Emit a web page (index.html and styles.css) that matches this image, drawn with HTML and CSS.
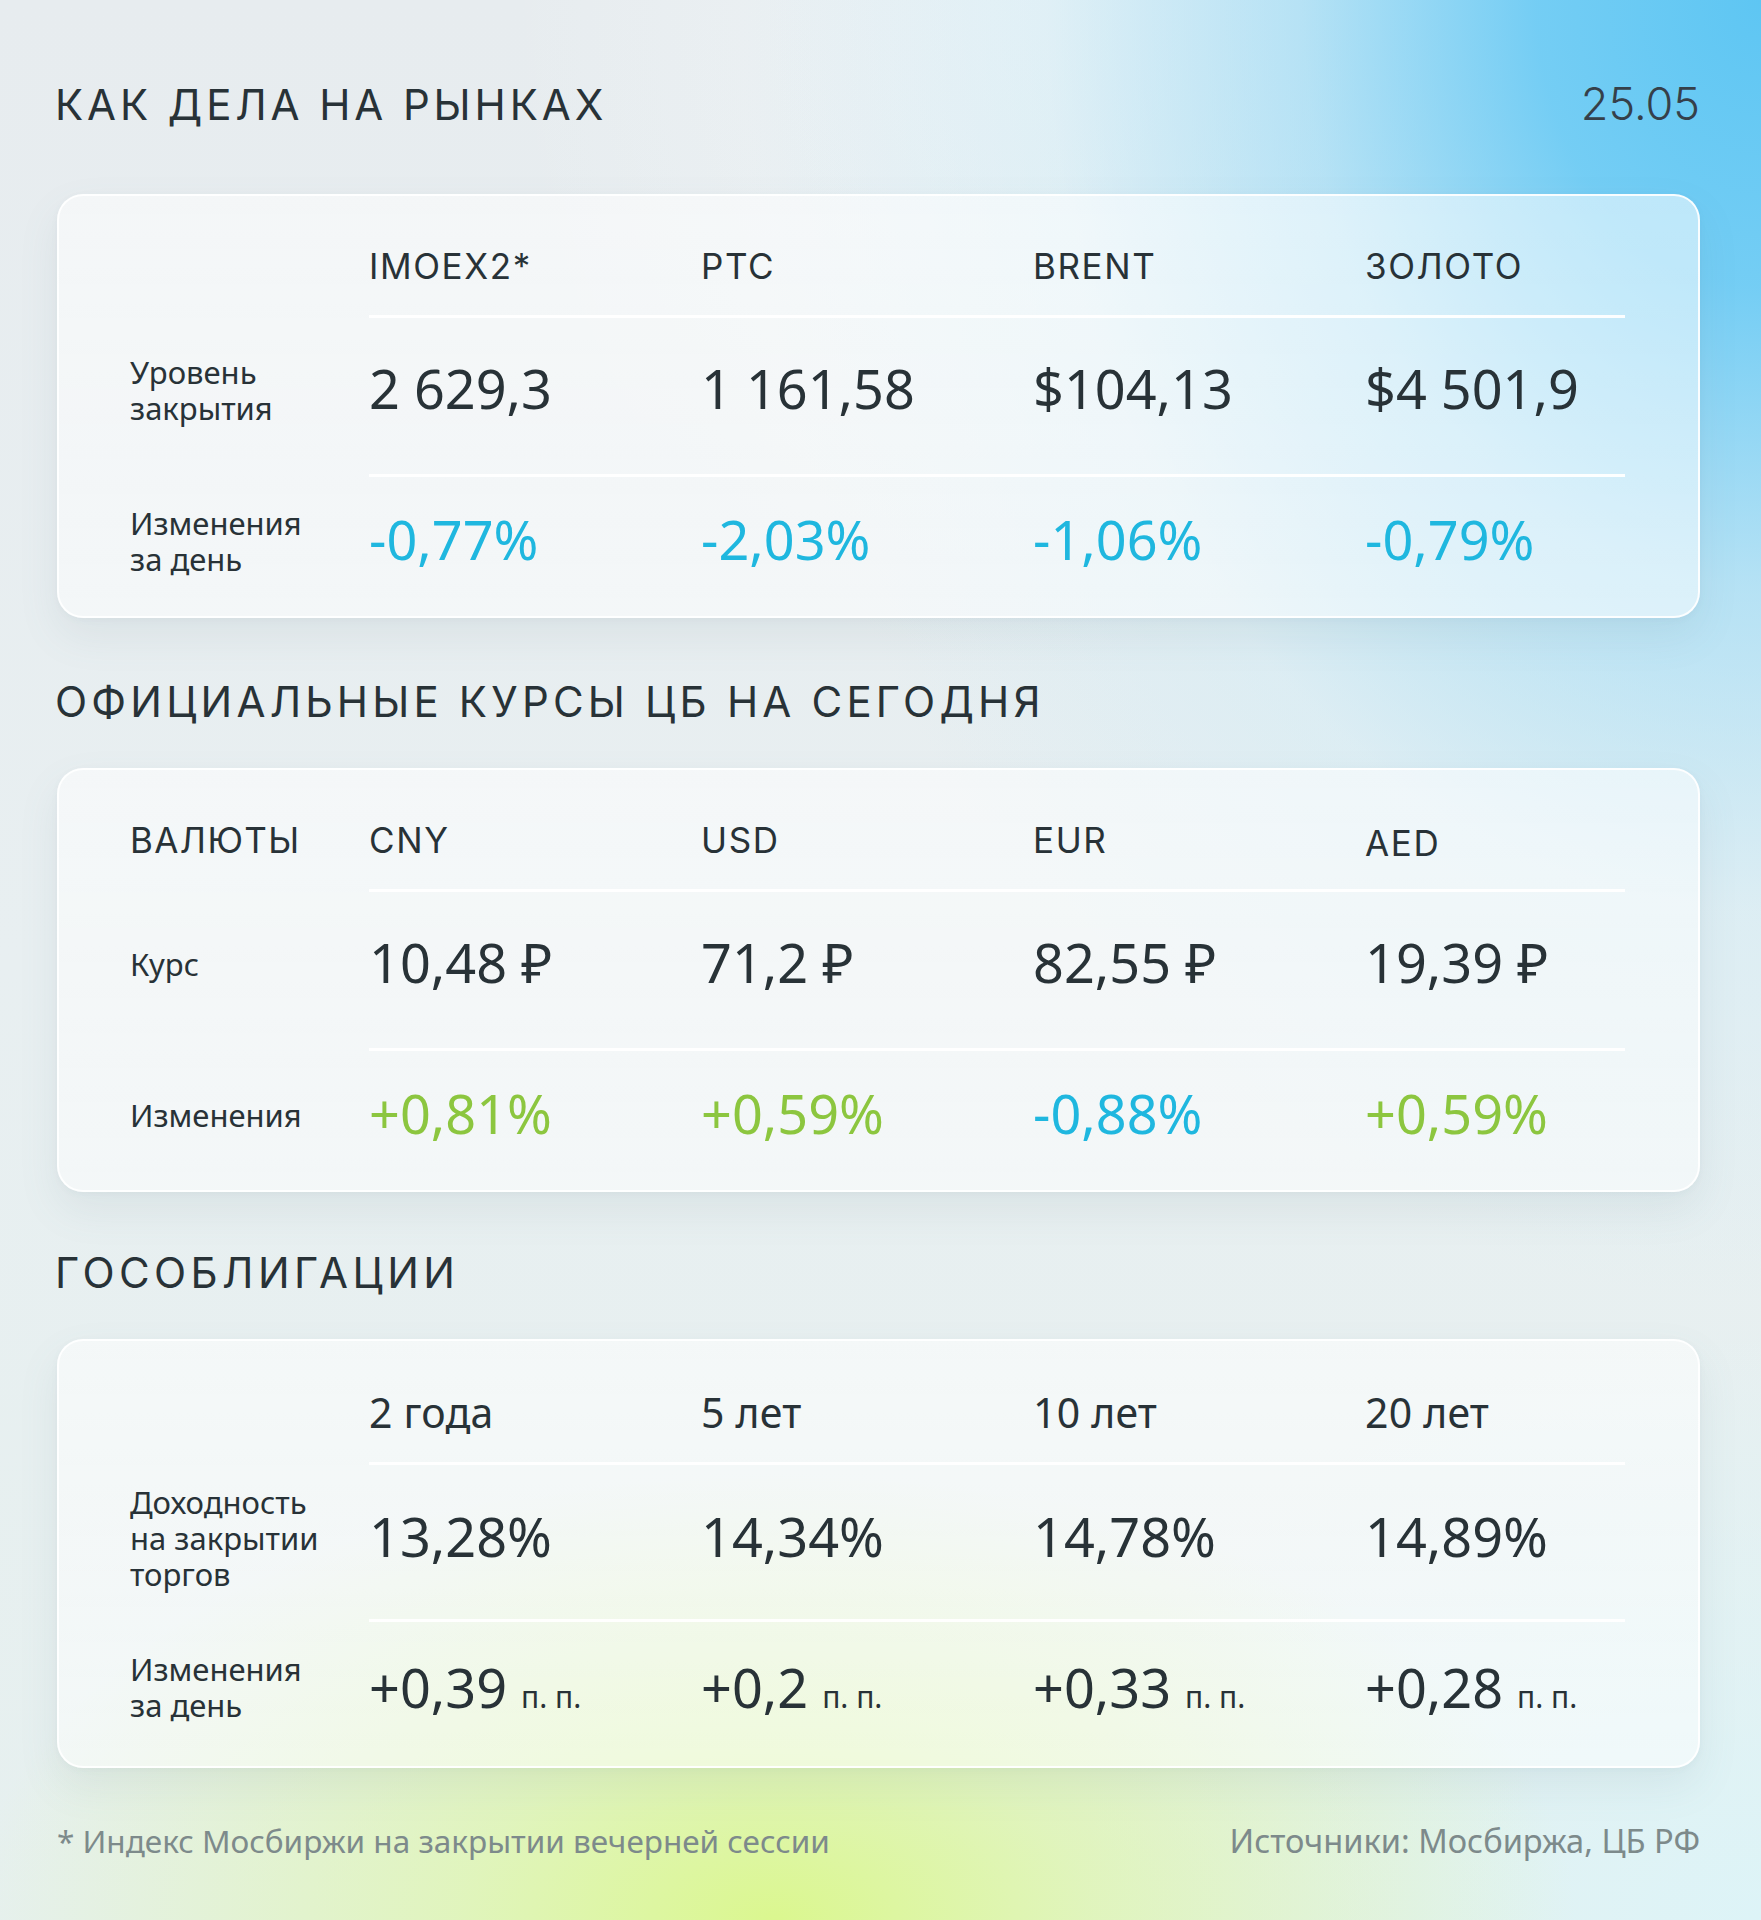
FILE: index.html
```html
<!DOCTYPE html>
<html lang="ru">
<head>
<meta charset="utf-8">
<title>Как дела на рынках</title>
<link rel="stylesheet" href="styles.css">
</head>
<body>
<div class="page">
  <div class="head">
    <h1 class="heading">КАК ДЕЛА НА РЫНКАХ</h1>
    <div class="date">25.05</div>
  </div>

  <section class="card card-first">
    <div class="row row-head">
      <div class="label"></div>
      <div class="cells">
        <div class="cell hcell">IMOEX2*</div>
        <div class="cell hcell">PTC</div>
        <div class="cell hcell">BRENT</div>
        <div class="cell hcell">ЗОЛОТО</div>
      </div>
    </div>
    <div class="row row-a">
      <div class="label">Уровень<br>закрытия</div>
      <div class="cells sep">
        <div class="cell val">2 629,3</div>
        <div class="cell val">1 161,58</div>
        <div class="cell val">$104,13</div>
        <div class="cell val">$4 501,9</div>
      </div>
    </div>
    <div class="row row-b">
      <div class="label">Изменения<br>за день</div>
      <div class="cells sep">
        <div class="cell val down">-0,77%</div>
        <div class="cell val down">-2,03%</div>
        <div class="cell val down">-1,06%</div>
        <div class="cell val down">-0,79%</div>
      </div>
    </div>
  </section>

  <h2 class="heading heading-2">ОФИЦИАЛЬНЫЕ КУРСЫ ЦБ НА СЕГОДНЯ</h2>

  <section class="card">
    <div class="row row-head">
      <div class="label hcell">ВАЛЮТЫ</div>
      <div class="cells">
        <div class="cell hcell">CNY</div>
        <div class="cell hcell">USD</div>
        <div class="cell hcell">EUR</div>
        <div class="cell hcell hcell-low">AED</div>
      </div>
    </div>
    <div class="row row-a">
      <div class="label">Курс</div>
      <div class="cells sep">
        <div class="cell val">10,48 ₽</div>
        <div class="cell val">71,2 ₽</div>
        <div class="cell val">82,55 ₽</div>
        <div class="cell val">19,39 ₽</div>
      </div>
    </div>
    <div class="row row-b">
      <div class="label">Изменения</div>
      <div class="cells sep">
        <div class="cell val up">+0,81%</div>
        <div class="cell val up">+0,59%</div>
        <div class="cell val down">-0,88%</div>
        <div class="cell val up">+0,59%</div>
      </div>
    </div>
  </section>

  <h2 class="heading heading-3">ГОСОБЛИГАЦИИ</h2>

  <section class="card card-bonds">
    <div class="row row-head">
      <div class="label"></div>
      <div class="cells">
        <div class="cell hcell hcell-big">2 года</div>
        <div class="cell hcell hcell-big">5 лет</div>
        <div class="cell hcell hcell-big">10 лет</div>
        <div class="cell hcell hcell-big">20 лет</div>
      </div>
    </div>
    <div class="row row-a">
      <div class="label">Доходность<br>на закрытии<br>торгов</div>
      <div class="cells sep">
        <div class="cell val">13,28%</div>
        <div class="cell val">14,34%</div>
        <div class="cell val">14,78%</div>
        <div class="cell val">14,89%</div>
      </div>
    </div>
    <div class="row row-b">
      <div class="label">Изменения<br>за день</div>
      <div class="cells sep">
        <div class="cell val">+0,39<span class="unit">п. п.</span></div>
        <div class="cell val">+0,2<span class="unit">п. п.</span></div>
        <div class="cell val">+0,33<span class="unit">п. п.</span></div>
        <div class="cell val">+0,28<span class="unit">п. п.</span></div>
      </div>
    </div>
  </section>

  <footer class="foot">
    <span class="note">* Индекс Мосбиржи на закрытии вечерней сессии</span>
    <span class="source">Источники: Мосбиржа, ЦБ РФ</span>
  </footer>
</div>
</body>
</html>
```

FILE: styles.css
```css
html, body {
  margin: 0;
  padding: 0;
}

body {
  width: 1761px;
  height: 1920px;
  overflow: hidden;
  font-family: "Noto Sans", "Open Sans", sans-serif;
  color: #283237;
}

.page {
  box-sizing: border-box;
  width: 1761px;
  height: 1920px;
  padding: 82px 61px 0 57px;
  display: flex;
  flex-direction: column;
  background:
    radial-gradient(ellipse 1020px 1300px at 100% 0%, #5ec6f3 0%, rgba(100, 201, 245, 0.88) 22%, rgba(150, 218, 247, 0.62) 45%, rgba(200, 235, 248, 0.36) 70%, rgba(225, 243, 248, 0) 100%),
    radial-gradient(ellipse 520px 700px at 58% 0%, rgba(245, 251, 253, 0.45) 0%, rgba(245, 251, 253, 0) 100%),
    radial-gradient(ellipse 800px 450px at 44% 100%, #dbf78f 0%, rgba(222, 246, 170, 0.72) 40%, rgba(225, 243, 215, 0) 100%),
    radial-gradient(ellipse 700px 600px at 100% 100%, rgba(220, 244, 248, 0.9) 0%, rgba(220, 244, 248, 0) 100%),
    linear-gradient(180deg, #e7ecef 0%, #e8eff1 50%, #e6f0ef 100%);
}

.head {
  display: flex;
  justify-content: space-between;
  align-items: baseline;
}

.heading {
  margin: 0 0 0 -2px;
  font-family: Inter, "Noto Sans", sans-serif;
  font-weight: 400;
  font-size: 42px;
  line-height: 43px;
  letter-spacing: 3.9px;
  color: #283237;
}

.date {
  font-family: Inter, "Noto Sans", sans-serif;
  font-weight: 300;
  font-size: 45px;
  line-height: 44px;
  color: #35404a;
}

.heading-2 {
  margin-top: 62px;
  letter-spacing: 4.2px;
}

.heading-3 {
  margin-top: 59px;
  letter-spacing: 4.4px;
}

.card {
  margin-top: 45px;
  box-sizing: border-box;
  border-radius: 26px;
  border: 2px solid rgba(255, 255, 255, 0.9);
  background: linear-gradient(180deg, rgba(255, 255, 255, 0.55) 0%, rgba(255, 255, 255, 0.5) 100%);
  box-shadow: 0 18px 40px rgba(95, 125, 135, 0.10), 0 2px 6px rgba(95, 125, 135, 0.05);
  padding: 21px 73px 0 71px;
}

.card-first {
  margin-top: 68px;
}

.row {
  display: grid;
  grid-template-columns: 239px 1fr;
}

.label {
  align-self: center;
  font-size: 31px;
  line-height: 36px;
  color: #283237;
}

.cells {
  display: grid;
  grid-template-columns: 332px 332px 332px 1fr;
  align-items: center;
}

.sep {
  border-top: 3px solid rgba(255, 255, 255, 0.95);
}

.row-head {
  height: 98px;
}

.row-a {
  height: 159px;
}

.row-a .cells {
  padding-bottom: 17px;
}

.row-a .label {
  padding-bottom: 9px;
}

.row-b {
  height: 142px;
}

.row-b .cells {
  padding-bottom: 16px;
}

.row-b .label {
  padding-bottom: 8px;
}

.row-a .cells,
.row-b .cells {
  box-sizing: border-box;
  height: 100%;
}

.row-a .label,
.row-b .label {
  box-sizing: border-box;
}

.hcell {
  font-family: Inter, "Noto Sans", sans-serif;
  font-size: 35px;
  line-height: 40px;
  letter-spacing: 1.6px;
  color: #283237;
}

.label.hcell {
  letter-spacing: 1.4px;
  padding-bottom: 0;
}

.hcell-low {
  padding-top: 5px;
}

.hcell-big {
  font-family: "Noto Sans", sans-serif;
  font-size: 41px;
  letter-spacing: 0.2px;
}

.val {
  font-size: 54px;
  line-height: 60px;
  white-space: nowrap;
  color: #283237;
}

.down {
  color: #1fb7df;
}

.up {
  color: #8cc63f;
}

.unit {
  font-size: 30px;
  margin-left: 14px;
}

.card-bonds .row-head {
  height: 100px;
}

.card-bonds .row-a {
  height: 157px;
}

.card-bonds .row-a .cells {
  padding-bottom: 12px;
}

.card-bonds .row-a .label {
  padding-bottom: 6px;
}

.card-bonds .row-b {
  height: 147px;
}

.card-bonds .row-b .cells {
  padding-bottom: 4px;
}

.card-bonds .row-b .label {
  padding-bottom: 12px;
}

.foot {
  margin-top: 57px;
  display: flex;
  justify-content: space-between;
  align-items: baseline;
  line-height: 32px;
  color: #7d8a8b;
}

.note {
  font-size: 31.5px;
}

.source {
  font-size: 32.6px;
}
```
